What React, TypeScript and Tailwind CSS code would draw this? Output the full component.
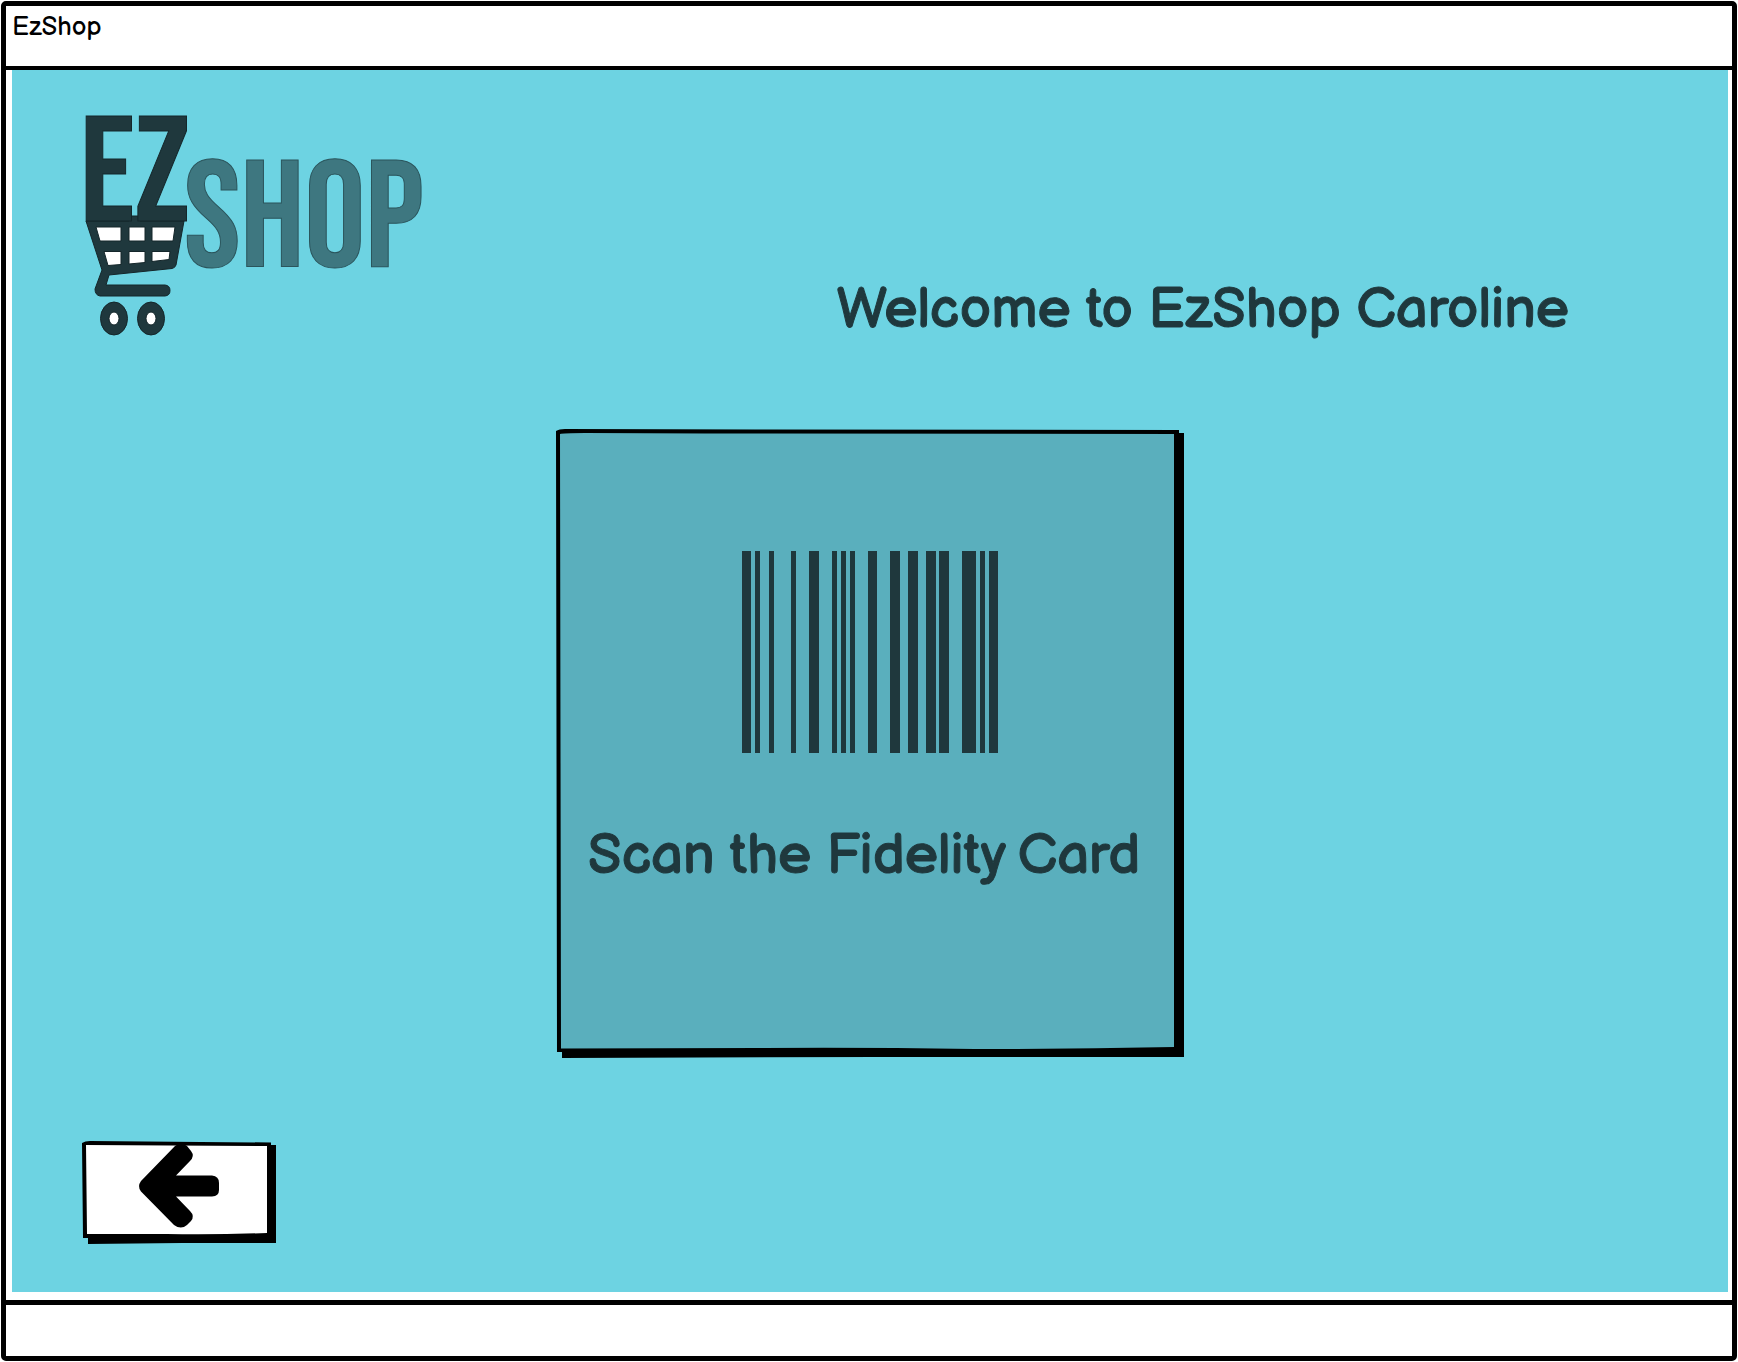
import React from "react";

const BARS: [number, number][] = [
  [0, 9], [13, 5], [27, 5], [49, 5], [67, 10], [90, 5], [99, 5], [108, 5],
  [126, 9], [148, 10], [166, 10], [184, 10], [197, 10], [220, 14], [238, 5], [247, 9],
];

function Logo() {
  return (
    <svg
      role="img"
      aria-label="EZ Shop"
      viewBox="0 0 344 226"
      className="h-[226px] w-[344px] shrink-0 overflow-visible"
      fontFamily="'Bebas Neue', 'Liberation Sans Narrow', 'Roboto Condensed', sans-serif"
      fontWeight="400"
    >
      <g fill="#1f383d" stroke="#14262a" strokeWidth="1">
        <path d="M4 109H47V104H58V109H102L94 153Q93 156 90 156.500L27 163L24 173H83Q88 173.500 88 178.500Q88 183.500 83 184H18Q13 183 13 177L20 158Z" />
        <ellipse cx="32" cy="206.500" rx="13.500" ry="16.500" />
        <ellipse cx="69" cy="206.500" rx="13.500" ry="16.500" />
        <text x="-2" y="110" fontSize="151">EZ</text>
      </g>
      <g fill="#fff" stroke="#14262a" strokeWidth="1">
        <path d="M14 115H39V129H18Z" />
        <path d="M47 115H63V129H47Z" />
        <path d="M70 115H93L91 129H70Z" />
        <path d="M22 139.500H39V152.500L26 153.500Z" />
        <path d="M47 139.500H63V150.500L47 152Z" />
        <path d="M70 139.500H88L87 147.500L70 149.500Z" />
        <ellipse cx="32" cy="206.500" rx="5" ry="6.500" />
        <ellipse cx="69" cy="206.500" rx="5" ry="6.500" />
      </g>
      <text x="102" y="154" fontSize="152" fill="#3e7780" stroke="#2b555c" strokeWidth="1">
        SHOP
      </text>
    </svg>
  );
}

function Barcode() {
  return (
    <svg viewBox="0 0 257 202" className="h-[202px] w-[257px]" aria-hidden="true">
      {BARS.map(([x, w]) => (
        <rect key={x} x={x} y="0" width={w} height="202" fill="#1f383d" />
      ))}
    </svg>
  );
}

function CardOutline() {
  return (
    <svg viewBox="0 0 630 630" preserveAspectRatio="none" className="absolute inset-0 h-full w-full" aria-hidden="true">
      <path d="M7 624H2L1 3Q4 1 10 1L200 1.500L624 2V5H629V629L320 629L7 630Z" fill="#000" />
      <path d="M5 6Q8 5 30 5L150 5.500L619 6V619Q520 621 420 621Q300 619 200 620L6 620.500Z" fill="#5aafbd" />
    </svg>
  );
}

function BackButton() {
  return (
    <button type="button" aria-label="Back" className="relative block h-[104px] w-[195px] cursor-pointer">
      <svg viewBox="0 0 195 104" preserveAspectRatio="none" className="absolute inset-0 h-full w-full" aria-hidden="true">
        <path d="M6 98H1L0 3Q3 1 8 1L189 2.500V5H194V103L100 103L6 104Z" fill="#000" />
        <path d="M4 5L185 6V93Q130 95 85 94L5 94Z" fill="#fff" />
        <path
          d="M93 6Q99 1 105 6L109 11Q113 16 108 21L94 35.500H130Q137 36 137 43V50Q137 56 130 56.500H94L108 71Q113 76 109 81L105 85Q99 90 92 85L59 51.500Q55 46.500 59 41Z"
          fill="#000"
        />
      </svg>
    </button>
  );
}

export default function App() {
  return (
    <div className="flex min-h-screen flex-col bg-white p-px font-['Balsamiq_Sans','Comic_Neue','Lato',sans-serif]">
      <div className="flex flex-1 flex-col rounded-[5px] border-[5px] border-black">
        <header className="h-[64px] border-b-4 border-black px-[6px] pt-[7px] text-[26px] leading-[30px] text-black">
          EzShop
        </header>
        <main className="mr-1 mb-2 ml-[6px] flex flex-1 flex-col bg-[#6dd3e2] px-[70px] pt-[42px] pb-[48px]">
          <div className="flex items-end justify-between pr-[89px]">
            <Logo />
            <h1 className="text-[56px] leading-[54px] text-[#1f383d] [-webkit-text-stroke:1px_currentColor]">
              Welcome to EzShop Caroline
            </h1>
          </div>
          <section className="relative mx-auto mt-[90px] h-[630px] w-[630px]">
            <CardOutline />
            <div className="relative flex flex-col items-center pt-[123px]">
              <Barcode />
              <h2 className="mt-[70px] pr-3 text-[56px] leading-[68px] text-[#1f383d] [-webkit-text-stroke:1px_currentColor]">
                Scan the Fidelity Card
              </h2>
            </div>
          </section>
          <div className="mt-auto">
            <BackButton />
          </div>
        </main>
        <footer className="h-[56px] border-t-[5px] border-black" />
      </div>
    </div>
  );
}
